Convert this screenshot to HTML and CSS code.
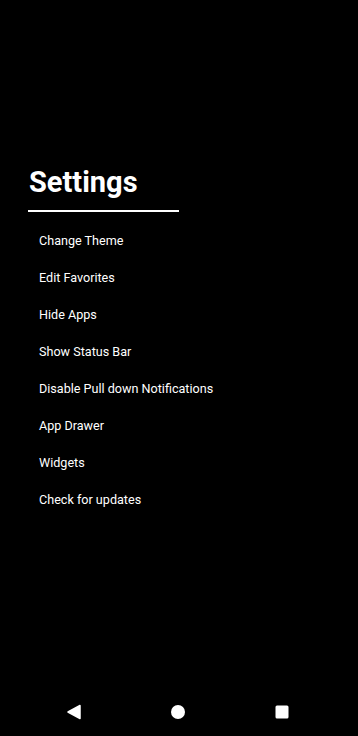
FILE: index.html
```html
<!DOCTYPE html>
<html lang="en">
<head>
  <meta charset="UTF-8">
  <title>Settings</title>
  <link rel="stylesheet" href="styles.css">
</head>
<body>

<div class="screen">
  <div class="settings">
    <h2>Settings</h2>
    <div class="line"></div>
    <ul class="menu">
      <li>Change Theme</li>
      <li>Edit Favorites</li>
      <li>Hide Apps</li>
      <li>Show Status Bar</li>
      <li>Disable Pull down Notifications</li>
      <li>App Drawer</li>
      <li>Widgets</li>
      <li>Check for updates</li>
    </ul>
  </div>

  <div class="nav-bar">
    <svg width="16" height="16" viewBox="0 0 16 16"><path d="M14 1.5 L14 14.5 L2 8 Z" fill="#fff" stroke="#fff" stroke-width="1.5" stroke-linejoin="round"/></svg>
    <svg width="16" height="16" viewBox="0 0 16 16"><circle cx="8" cy="8" r="7" fill="#fff"/></svg>
    <svg width="16" height="16" viewBox="0 0 16 16"><rect x="1.5" y="1.5" width="13" height="13" rx="1.5" fill="#fff"/></svg>
  </div>
</div>

</body>
</html>
```

FILE: styles.css
```css
body {
  margin: 0;
  background: #000;
  color: #fff;
  font-family: Roboto, "Noto Sans", sans-serif;
}
.screen {
  height: 736px;
  display: flex;
  flex-direction: column;
  justify-content: space-between;
}
.settings {
  padding: 164px 0 0 29px;
}
h2 {
  margin: 0;
  font-size: 29px;
  font-weight: 700;
  line-height: 36px;
}
.line {
  width: 151px;
  height: 2px;
  background: #fff;
  margin: 10px 0 0 -1px;
}
.menu {
  list-style: none;
  margin: 10px 0 0;
  padding: 0 0 0 10px;
}
.menu li {
  font-size: 12.6px;
  line-height: 37px;
}
.nav-bar {
  height: 48px;
  display: flex;
  align-items: center;
  justify-content: space-between;
  padding: 0 68px 0 66px;
}
```
